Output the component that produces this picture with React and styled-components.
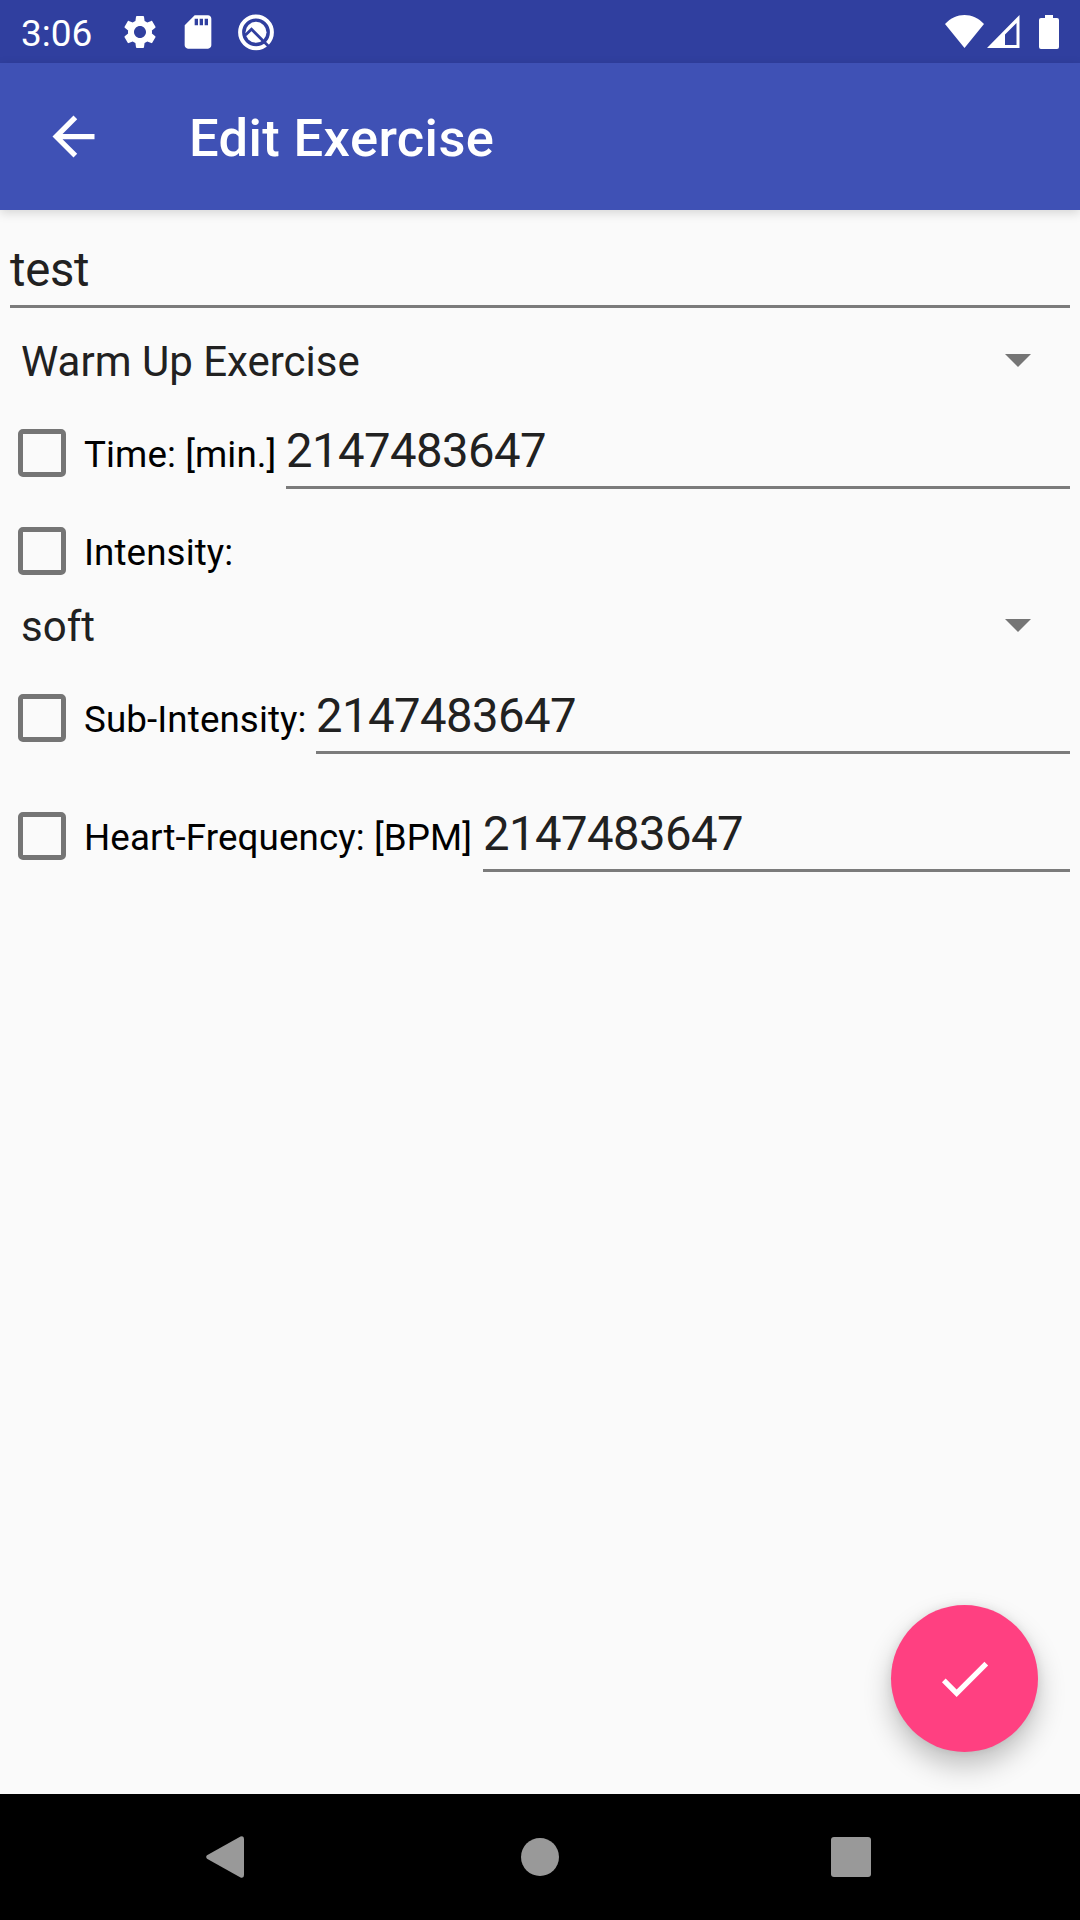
import React from "react";
import styled, { createGlobalStyle } from "styled-components";

const GlobalStyle = createGlobalStyle`
  * { box-sizing: border-box; }
  body { margin: 0; background: #fafafa; font-family: Roboto, "Liberation Sans", sans-serif; }
`;

const Screen = styled.div`
  display: flex;
  flex-direction: column;
  width: 1080px;
  height: 1920px;
  background: #fafafa;
`;

const StatusBar = styled.header`
  display: flex;
  align-items: center;
  height: 63px;
  padding: 0 21px;
  background: #303f9f;
`;

const Clock = styled.span`
  width: 94px;
  padding-top: 5px;
  font-size: 37px;
  line-height: 44px;
  color: #fff;
`;

const StatusIcon = styled.svg`
  display: block;
  flex: none;
  fill: #fff;
  margin-left: ${(p) => p.$gap || 0}px;
`;

const Spacer = styled.div`
  flex: 1;
`;

const Toolbar = styled.div`
  display: flex;
  align-items: center;
  height: 147px;
  padding-left: 42px;
  background: #3f51b5;
  box-shadow: 0 3px 10px rgba(0, 0, 0, 0.15);
`;

const IconSvg = styled.svg`
  display: block;
  width: 63px;
  height: 63px;
  fill: #fff;
`;

const Title = styled.h1`
  margin: 3px 0 0 84px;
  font-size: 52.5px;
  font-weight: 500;
  line-height: 62px;
  letter-spacing: 0.38px;
  color: #fff;
`;

const Form = styled.main`
  display: flex;
  flex-direction: column;
  flex: 1;
  padding-right: 10px;
`;

const Field = styled.div`
  flex: 1;
  padding-bottom: 7px;
  border-bottom: 3px solid #7b7b7b;
  font-size: 47.25px;
  line-height: 56px;
  letter-spacing: ${(p) => p.$tracking}px;
  color: #212121;
`;

const Row = styled.div`
  display: flex;
  align-items: flex-end;
  height: ${(p) => p.$height}px;
  margin-bottom: ${(p) => p.$after || 0}px;
  padding-left: ${(p) => p.$inset || 0}px;
`;

const CheckLabel = styled.label`
  display: flex;
  align-items: center;
  width: ${(p) => p.$width || "auto"};
  height: 48px;
  margin-bottom: ${(p) => p.$bottom}px;
  padding-left: 18px;
  font-size: 36.75px;
  line-height: 44px;
  letter-spacing: 0.1px;
  white-space: nowrap;
  color: #000;
`;

const LabelText = styled.span`
  padding-top: 3px;
`;

const Box = styled.span`
  flex: none;
  width: 48px;
  height: 48px;
  margin-right: 18px;
  border: 5px solid #757575;
  border-radius: 5px;
`;

const Spinner = styled.div`
  display: flex;
  align-items: center;
  justify-content: space-between;
  height: 96px;
  padding: 0 39.5px 0 21px;
  font-size: 42px;
  line-height: 50px;
  color: #212121;
`;

const SpinnerText = styled.span`
  padding-top: 2px;
`;

const Caret = styled.svg`
  display: block;
  width: 26px;
  height: 13px;
  margin-bottom: 1px;
  fill: #757575;
`;

const FabArea = styled.div`
  display: flex;
  justify-content: flex-end;
  padding: 0 42px 42px 0;
`;

const Fab = styled.button`
  display: flex;
  align-items: center;
  justify-content: center;
  width: 147px;
  height: 147px;
  padding: 0;
  border: 0;
  border-radius: 50%;
  background: #ff4081;
  box-shadow: 0 14px 28px rgba(0, 0, 0, 0.24), 0 0 10px rgba(0, 0, 0, 0.08);
`;

const NavBar = styled.nav`
  display: flex;
  align-items: center;
  justify-content: space-between;
  height: 126px;
  padding: 0 209px 0 206px;
  background: #000;
`;

const NavIcon = styled.svg`
  display: block;
  margin-left: ${(p) => p.$gap || 0}px;
  fill: #999;
`;

function CheckField({ label, value, height, width }) {
  return (
    <Row $height={height}>
      <CheckLabel $bottom={12} $width={width}>
        <Box />
        <LabelText>{label}</LabelText>
      </CheckLabel>
      <Field $tracking={-0.55}>{value}</Field>
    </Row>
  );
}

function Select({ value }) {
  return (
    <Spinner>
      <SpinnerText>{value}</SpinnerText>
      <Caret viewBox="0 0 26 13">
        <path d="M0 0H26L13 13Z" />
      </Caret>
    </Spinner>
  );
}

export default function App() {
  return (
    <>
      <GlobalStyle />
      <Screen>
        <StatusBar>
          <Clock>3:06</Clock>
          <StatusIcon $gap={5} width="40" height="40" viewBox="0 0 24 24">
            <path d="M19.14 12.94c.04-.3.06-.61.06-.94 0-.32-.02-.64-.07-.94l2.03-1.58c.18-.14.23-.41.12-.61l-1.92-3.32c-.12-.22-.37-.29-.59-.22l-2.39.96c-.5-.38-1.03-.7-1.62-.94l-.36-2.54c-.04-.24-.24-.41-.48-.41h-3.84c-.24 0-.43.17-.47.41l-.36 2.54c-.59.24-1.13.57-1.62.94l-2.39-.96c-.22-.08-.47 0-.59.22L2.74 8.87c-.12.21-.08.47.12.61l2.03 1.58c-.05.3-.09.63-.09.94s.02.64.07.94l-2.03 1.58c-.18.14-.23.41-.12.61l1.92 3.32c.12.22.37.29.59.22l2.39-.96c.5.38 1.03.7 1.62.94l.36 2.54c.05.24.24.41.48.41h3.84c.24 0 .44-.17.47-.41l.36-2.54c.59-.24 1.13-.56 1.62-.94l2.39.96c.22.08.47 0 .59-.22l1.92-3.32c.12-.22.07-.47-.12-.61l-2.01-1.58zM12 15.6c-1.980 0-3.600-1.620-3.600-3.600s1.620-3.600 3.600-3.600 3.600 1.620 3.600 3.600-1.620 3.600-3.600 3.600z" />
          </StatusIcon>
          <StatusIcon $gap={18} width="40" height="40" viewBox="0 0 24 24">
            <path d="M18 2h-8L4.020 8 4 20c0 1.100.9 2 2 2h12c1.100 0 2-.9 2-2V4c0-1.100-.9-2-2-2zm-6 6h-2V4h2v4zm3 0h-2V4h2v4zm3 0h-2V4h2v4z" />
          </StatusIcon>
          <StatusIcon $gap={18} width="40" height="40" viewBox="236 11 40 40">
            <circle cx="256" cy="31.300" r="15.900" fill="none" stroke="#fff" strokeWidth="4" />
            <circle cx="256" cy="31.300" r="10.500" />
            <path d="M245.500 34L251.500 28.300L270.500 47.300" fill="none" stroke="#303f9f" strokeWidth="2.800" />
          </StatusIcon>
          <Spacer />
          <StatusIcon width="39" height="33" viewBox="0 0 39 33">
            <path d="M0 9C11-3 28-3 39 9L19.500 33Z" />
          </StatusIcon>
          <StatusIcon $gap={3} width="33" height="33" viewBox="0 0 33 33">
            <path fillRule="evenodd" d="M0 33L32.500 0V33ZM18 30H29.500V8L18 19.500Z" />
          </StatusIcon>
          <StatusIcon $gap={19} width="20" height="34" viewBox="0 0 20 34">
            <path d="M6 0H14V3H18A2 2 0 0 1 20 5V32A2 2 0 0 1 18 34H2A2 2 0 0 1 0 32V5A2 2 0 0 1 2 3H6Z" />
          </StatusIcon>
        </StatusBar>
        <Toolbar>
          <IconSvg viewBox="0 0 24 24">
            <path d="M20 11H7.830l5.590-5.590L12 4l-8 8 8 8 1.410-1.410L7.830 13H20v-2z" />
          </IconSvg>
          <Title>Edit Exercise</Title>
        </Toolbar>
        <Form>
          <Row $height={98} $inset={10} $after={5}>
            <Field $tracking={-0.3}>test</Field>
          </Row>
          <Select value="Warm Up Exercise" />
          <CheckField label="Time: [min.]" value="2147483647" height={80} width="286px" />
          <Row $height={89}>
            <CheckLabel $bottom={3}>
              <Box />
              <LabelText>Intensity:</LabelText>
            </CheckLabel>
          </Row>
          <Select value="soft" />
          <CheckField label="Sub-Intensity:" value="2147483647" height={80} width="316px" />
          <CheckField label="Heart-Frequency: [BPM]" value="2147483647" height={118} width="483px" />
        </Form>
        <FabArea>
          <Fab aria-label="Save">
            <IconSvg viewBox="0 0 24 24">
              <path d="M9 16.170L4.830 12l-1.420 1.410L9 19 21 7l-1.410-1.410z" />
            </IconSvg>
          </Fab>
        </FabArea>
        <NavBar>
          <NavIcon width="38" height="42" viewBox="0 0 38 42">
            <path d="M1 19.300L34.500 .6Q38 -.6 38 3V39Q38 42.600 34.500 41.400L1 22.700Q-.6 21 1 19.300Z" />
          </NavIcon>
          <NavIcon $gap={4} width="38" height="38" viewBox="0 0 38 38">
            <circle cx="19" cy="19" r="19" />
          </NavIcon>
          <NavIcon width="40" height="40" viewBox="0 0 40 40">
            <rect width="40" height="40" rx="3" />
          </NavIcon>
        </NavBar>
      </Screen>
    </>
  );
}
